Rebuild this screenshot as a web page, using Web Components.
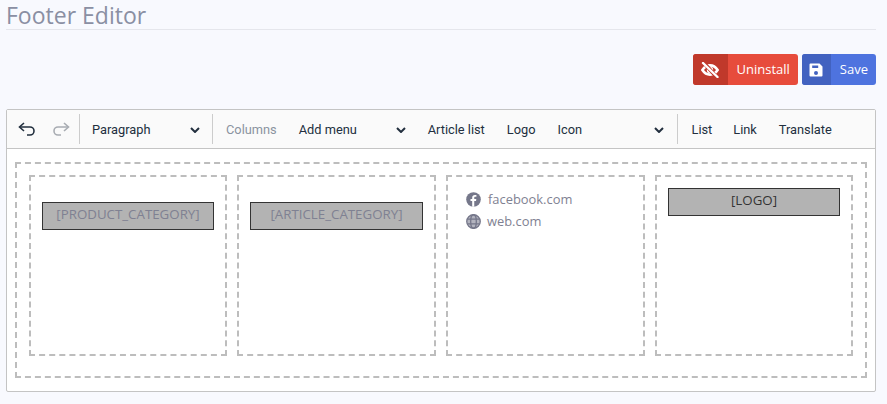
<!DOCTYPE html>
<html>
<head>
<meta charset="utf-8">
<title>Footer Editor</title>
<style>
    html, body { margin: 0; height: 100%; background: #f8f9fe; }
    body { padding: 0 11px 0 6px; font-family: "Open Sans", sans-serif; box-sizing: border-box; overflow: hidden; }
</style>
</head>
<body>
<page-title>Footer Editor</page-title>
<action-bar>
    <icon-button color="#e74c3c" shade="#c0392b" label="Uninstall" icon-width="35">
        <svg viewBox="0 0 18 16" width="18" height="16" fill="none" stroke="#fff" stroke-linecap="round">
            <path d="M1.400 8C3.400 4.900 6 3.400 9 3.400s5.600 1.500 7.600 4.600C14.600 11.100 12 12.600 9 12.600S3.400 11.100 1.400 8z" stroke-width="2.600"/>
            <circle cx="9" cy="8" r="3.200" fill="#fff" stroke="none"/>
            <path d="M3.200 1.200 15.400 14.800" stroke="#c0392b" stroke-width="3.800"/>
            <path d="M2 1 16.500 15" stroke-width="2.400"/>
        </svg>
    </icon-button>
    <icon-button color="#4e73df" shade="#4262c0" label="Save" icon-width="29">
        <svg viewBox="0 0 14 14" width="14" height="14">
            <path fill="#fff" fill-rule="evenodd" d="M1.500 .5h9L13.500 3.500v9a1 1 0 0 1-1 1h-11a1 1 0 0 1-1-1v-11a1 1 0 0 1 1-1zM3.200 2.500v2.600h6v-2.600zM7 8a2 2 0 1 0 0 4 2 2 0 0 0 0-4z"/>
        </svg>
    </icon-button>
</action-bar>
<editor-box>
    <edit-toolbar slot="toolbar"></edit-toolbar>
    <dash-frame outer>
        <dash-frame><shortcode-tag dim>[PRODUCT_CATEGORY]</shortcode-tag></dash-frame>
        <dash-frame><shortcode-tag dim>[ARTICLE_CATEGORY]</shortcode-tag></dash-frame>
        <dash-frame><social-links></social-links></dash-frame>
        <dash-frame logo><shortcode-tag>[LOGO]</shortcode-tag></dash-frame>
    </dash-frame>
</editor-box>

<script>
class PageTitle extends HTMLElement {
    constructor() {
        super();
        this.attachShadow({ mode: 'open' }).innerHTML = `<style>
            :host { display: block; height: 29px; border-bottom: 1px solid #e5e6ec; color: #8a8fa3; font-size: 23px; line-height: 31px; }
        </style><slot></slot>`;
    }
}

class ActionBar extends HTMLElement {
    constructor() {
        super();
        this.attachShadow({ mode: 'open' }).innerHTML = `<style>
            :host { display: flex; justify-content: flex-end; gap: 4px; margin-top: 24px; height: 31px; margin-bottom: 24px; }
        </style><slot></slot>`;
    }
}

class IconButton extends HTMLElement {
    static get observedAttributes() {
        return ['color', 'shade', 'label', 'icon-width'];
    }

    constructor() {
        super();
        this.attachShadow({ mode: 'open' }).innerHTML = `<style>
            :host { display: flex; height: 31px; border-radius: 3px; overflow: hidden; color: #fff; font-size: 13px; line-height: 31px; }
            .ico { width: 35px; display: flex; align-items: center; justify-content: center; }
            .txt { padding: 0 8px 0 9px; }
        </style><span class="ico"><slot></slot></span><span class="txt"></span>`;
    }

    attributeChangedCallback(attr, oldVal, newVal) {
        switch (attr) {
            case 'color':
                this.style.background = newVal;
                break;
            case 'shade':
                this.shadowRoot.querySelector('.ico').style.background = newVal;
                break;
            case 'label':
                this.shadowRoot.querySelector('.txt').textContent = newVal;
                break;
            case 'icon-width':
                this.shadowRoot.querySelector('.ico').style.width = newVal + 'px';
                break;
        }
    }
}

class EditorBox extends HTMLElement {
    constructor() {
        super();
        this.attachShadow({ mode: 'open' }).innerHTML = `<style>
            :host { display: block; height: 283px; box-sizing: border-box; border: 1px solid #c4c4c4; border-radius: 2px; background: #fff; }
            .body { padding: 13px 8px 0; }
        </style><slot name="toolbar"></slot><div class="body"><slot></slot></div>`;
    }
}

const chevron = `<svg class="chev" viewBox="0 0 10 6" width="10" height="6" fill="none" stroke="#222f3e" stroke-width="2"><path d="M1 1l4 4 4-4"/></svg>`;

class EditToolbar extends HTMLElement {
    constructor() {
        super();
        this.attachShadow({ mode: 'open' }).innerHTML = `<style>
            :host { display: flex; align-items: center; height: 39px; box-sizing: border-box; border-bottom: 1px solid #c4c4c4; background: #fafafa; color: #222f3e; font: 12.800px/1 Roboto, sans-serif; white-space: nowrap; }
            .sep { width: 1px; height: 30px; background: #ccc; flex: none; }
            .undo { width: 72px; display: flex; gap: 16px; padding-left: 11px; box-sizing: border-box; }
            .sel { display: flex; align-items: center; justify-content: space-between; flex: none; box-sizing: border-box; }
            .off { color: #8a93a0; }
            .item, .sel { flex: none; position: relative; top: 1px; }
            .chev { flex: none; }
        </style>
        <div class="undo">
            <svg viewBox="0 0 18 14" width="18" height="14" fill="none" stroke="#222f3e" stroke-width="1.600"><path d="M6 1 1.500 5 6 9"/><path d="M2 5h10a4 4 0 0 1 0 8H9"/></svg>
            <svg viewBox="0 0 18 14" width="18" height="14" fill="none" stroke="#a8acb2" stroke-width="1.600"><path d="M12 1l4.500 4L12 9"/><path d="M16 5H6a4 4 0 0 0 0 8h3"/></svg>
        </div>
        <span class="sep"></span>
        <div class="sel" style="width:132px;padding:0 12px 0 12px">Paragraph ${chevron}</div>
        <span class="sep"></span>
        <span class="item off" style="margin-left:13px">Columns</span>
        <div class="sel" style="width:107px;margin-left:22px">Add menu ${chevron}</div>
        <span class="item" style="margin-left:22px">Article list</span>
        <span class="item" style="margin-left:22px">Logo</span>
        <div class="sel" style="width:107px;margin-left:22px">Icon ${chevron}</div>
        <span class="sep" style="margin-left:13px"></span>
        <span class="item" style="margin-left:13px">List</span>
        <span class="item" style="margin-left:21px">Link</span>
        <span class="item" style="margin-left:22px">Translate</span>`;
    }
}

class DashFrame extends HTMLElement {
    constructor() {
        super();
        this.attachShadow({ mode: 'open' }).innerHTML = `<style>
            :host { display: block; box-sizing: border-box; border: 2px dashed #bdbdbd; min-width: 0; }
            :host([outer]) { display: grid; grid-template-columns: 198px 199px 199px 198px; gap: 10px; height: 216px; padding: 11px 12px 20px; }
            :host(:not([outer])) { padding: 25px 11px 0; }
            :host([logo]) { padding-top: 11px; }
        </style><slot></slot>`;
    }
}

class ShortcodeTag extends HTMLElement {
    constructor() {
        super();
        this.attachShadow({ mode: 'open' }).innerHTML = `<style>
            :host { display: block; box-sizing: border-box; height: 28px; border: 1px solid #333; background: #b3b3b3; color: #333; text-align: center; font-size: 13.300px; line-height: 23px; white-space: nowrap; overflow: hidden; }
            :host([dim]) { color: #7f8192; }
        </style><slot></slot>`;
    }
}

class SocialLinks extends HTMLElement {
    constructor() {
        super();
        this.attachShadow({ mode: 'open' }).innerHTML = `<style>
            :host { display: block; margin-top: -14px; padding-left: 7px; color: #7f8192; font-size: 12.900px; line-height: 22px; }
            div { display: flex; align-items: center; gap: 7px; }
            svg { flex: none; }
        </style>
        <div>
            <svg viewBox="0 0 16 16" width="15" height="15"><circle cx="8" cy="8" r="7.800" fill="#75778a"/><path fill="#fff" d="M8.800 15.800V9.700h1.900l.3-2.200H8.800V6.200c0-.7.300-1.100 1.200-1.100h1.100V3.200c-.4-.1-1-.1-1.600-.1-1.800 0-2.900 1-2.900 2.900v1.500H4.800v2.200h1.800v6.100z"/></svg>
            <span>facebook.com</span>
        </div>
        <div style="gap:6px">
            <svg viewBox="0 0 16 16" width="15" height="15" fill="none" stroke="#75778a" stroke-width="1.400"><circle cx="8" cy="8" r="7.200" fill="#75778a" fill-opacity=".55"/><ellipse cx="8" cy="8" rx="3" ry="7.200"/><path d="M1.500 5.500h13M1.500 10.500h13"/></svg>
            <span>web.com</span>
        </div>`;
    }
}

customElements.define('page-title', PageTitle);
customElements.define('action-bar', ActionBar);
customElements.define('icon-button', IconButton);
customElements.define('editor-box', EditorBox);
customElements.define('edit-toolbar', EditToolbar);
customElements.define('dash-frame', DashFrame);
customElements.define('shortcode-tag', ShortcodeTag);
customElements.define('social-links', SocialLinks);
</script>
</body>
</html>
